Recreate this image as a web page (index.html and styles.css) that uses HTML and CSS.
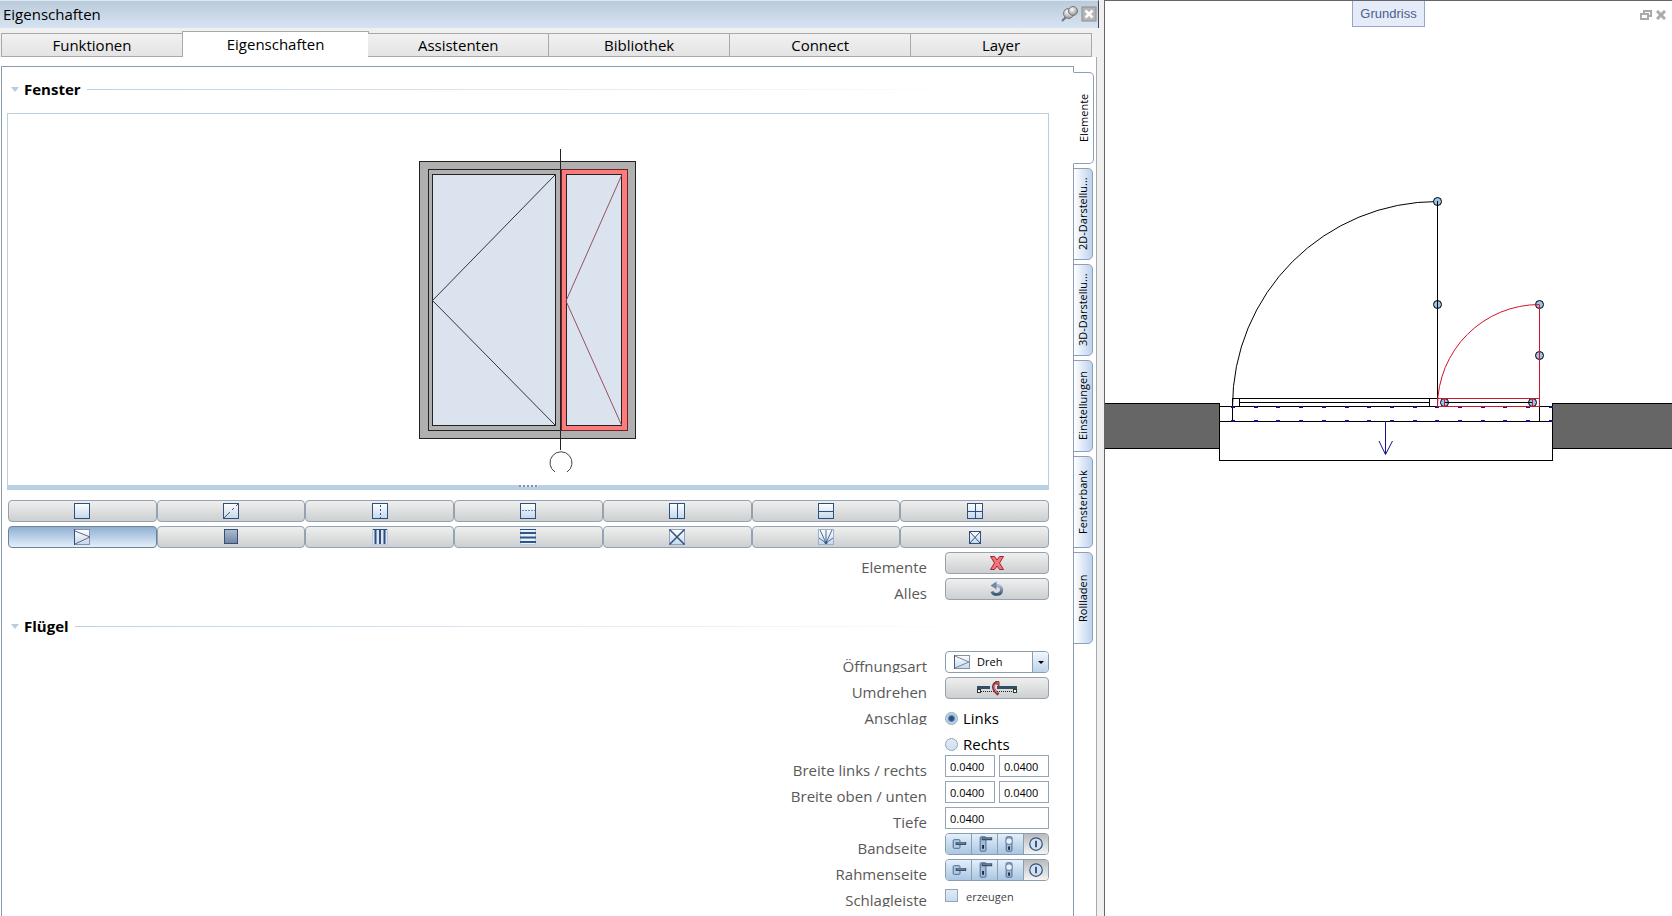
FILE: index.html
```html
<!DOCTYPE html>
<html lang="de">
<head>
<meta charset="utf-8">
<title>Eigenschaften</title>
<link rel="stylesheet" href="styles.css">
</head>
<body>
<svg class="defs" width="0" height="0" aria-hidden="true">
  <defs>
    <linearGradient id="glass" x1="0" y1="0" x2="0" y2="1"><stop offset="0" stop-color="#fff"/><stop offset="1" stop-color="#c3d8ee"/></linearGradient>
    <linearGradient id="solid" x1="0" y1="0" x2="0" y2="1"><stop offset="0" stop-color="#aebdd2"/><stop offset="1" stop-color="#70859f"/></linearGradient>
    <linearGradient id="steel" x1="0" y1="0" x2="0" y2="1"><stop offset="0" stop-color="#a9bdd2"/><stop offset="1" stop-color="#3c5876"/></linearGradient>
    <radialGradient id="ball" cx=".4" cy=".35" r=".7"><stop offset="0" stop-color="#fff"/><stop offset="1" stop-color="#8b8b8b"/></radialGradient>
    <symbol id="handle" viewBox="0 0 26 20">
      <rect x="7.500" y="5.500" width="7" height="9" rx="1" fill="#b4cbe3" stroke="#4b6788"/><path d="M10 9.500h11" stroke="#35516f" stroke-width="3"/><path d="M11 9h9" stroke="#88a3bf"/>
    </symbol>
    <symbol id="longhandle" viewBox="0 0 26 20">
      <rect x="8.500" y="2.500" width="6" height="15" rx="1" fill="#a3bbd5" stroke="#4b6788"/><path d="M10 4.500h11" stroke="#35516f" stroke-width="3"/><path d="M11 4h9" stroke="#7892ad"/><path d="M11.500 11v4" stroke="#172b45" stroke-width="2"/>
    </symbol>
    <symbol id="knob" viewBox="0 0 26 20">
      <rect x="8.500" y="2.500" width="6" height="15" rx="1" fill="#a3bbd5" stroke="#4b6788"/><circle cx="11.500" cy="7" r="3.500" fill="#e4f0fb" stroke="#5f7c9e"/><path d="M11.500 12.500v3.500" stroke="#172b45" stroke-width="2"/>
    </symbol>
    <symbol id="info" viewBox="0 0 26 20">
      <circle cx="12.500" cy="10" r="6.500" fill="#d3e2f2" stroke="#35547a" stroke-width="1.300"/><path d="M12.500 6.500v7" stroke="#35547a" stroke-width="2"/>
    </symbol>
  </defs>
</svg>
<div class="app">
  <section class="props">
    <header class="titlebar">
      <h1>Eigenschaften</h1>
      <button class="bare" aria-label="Anheften"><svg width="18" height="18" viewBox="0 0 18 18"><path d="M1 16l5-5" stroke="#777" stroke-width="2"/><circle cx="7.500" cy="8.500" r="5" fill="url(#ball)" stroke="#777"/><path d="M6 8l5-5 4 4-5 5z" fill="#d4d4d4"/><circle cx="12" cy="6" r="4.500" fill="url(#ball)" stroke="#777"/></svg></button>
      <button class="bare" aria-label="Schließen"><svg width="16" height="16" viewBox="0 0 16 16"><rect x="1" y="1" width="14" height="14" fill="#b5b5b5" stroke="#8e8e8e"/><path d="M4.500 4.500l7 7m0-7l-7 7" stroke="#fff" stroke-width="2.500"/></svg></button>
    </header>
    <nav class="tabs">
      <button>Funktionen</button><button class="active">Eigenschaften</button><button>Assistenten</button><button>Bibliothek</button><button>Connect</button><button>Layer</button>
    </nav>
    <div class="frame">
      <main class="panel">
        <h2 class="group">Fenster</h2>
        <div class="preview">
          <svg width="218" height="326" viewBox="419 148 218 326" fill="none" stroke="#222">
            <rect x="419.500" y="161.500" width="216" height="277" fill="#b0b0b0"/>
            <rect x="428.500" y="169.500" width="199" height="261"/>
            <rect x="561.500" y="169.500" width="66" height="261" fill="#fc7b7b" stroke="#6b2428"/>
            <rect x="432.500" y="174.500" width="123" height="251" fill="#dae3ee"/>
            <rect x="566.500" y="174.500" width="55" height="251" fill="#dae3ee"/>
            <path d="M555.500 174.500L432.500 300.500l123 125" stroke="#2f3744"/>
            <path d="M621.500 175.500L566 301l55.500 124" stroke="#96525f"/>
            <path d="M560.500 149v301"/>
            <path d="M555 472a11 11 0 1 1 12 0" stroke="#444"/>
          </svg>
          <div class="grip"></div>
        </div>
        <div class="toolgrid">
          <button aria-label="Feld"><svg class="ic"><rect x=".5" y=".5" width="15" height="15" fill="url(#glass)"/></svg></button>
          <button aria-label="Diagonal teilen"><svg class="ic"><rect x=".5" y=".5" width="15" height="15" fill="url(#glass)"/><path d="M1 15l6-6m2-2l2-2m2-2l2-2" stroke="#555"/></svg></button>
          <button aria-label="Kämpfer senkrecht"><svg class="ic"><rect x=".5" y=".5" width="15" height="15" fill="url(#glass)"/><path d="M8.500 2v13" stroke-dasharray="2 2"/></svg></button>
          <button aria-label="Kämpfer waagrecht"><svg class="ic"><rect x=".5" y=".5" width="15" height="15" fill="url(#glass)"/><path d="M2 7.500h13" stroke="#6f86a8" stroke-dasharray="2 1"/></svg></button>
          <button aria-label="Senkrecht teilen"><svg class="ic"><rect x=".5" y=".5" width="15" height="15" fill="url(#glass)"/><path d="M8.500 1v14"/></svg></button>
          <button aria-label="Waagrecht teilen"><svg class="ic"><rect x=".5" y=".5" width="15" height="15" fill="url(#glass)"/><path d="M1 8.500h14"/></svg></button>
          <button aria-label="Kreuz"><svg class="ic"><rect x=".5" y=".5" width="15" height="15" fill="url(#glass)"/><path d="M8.500 1v14M1 8.500h14"/></svg></button>
          <button class="on" aria-label="Flügel"><svg class="ic"><rect x=".5" y=".5" width="15" height="15" fill="url(#glass)" stroke="#8294ab"/><path d="M.5 0v16"/><path d="M1 2l15 6-15 7" stroke="#667"/></svg></button>
          <button aria-label="Füllung"><svg class="ic"><rect x="1.500" y=".5" width="13" height="14" fill="url(#solid)"/></svg></button>
          <button aria-label="Stäbe senkrecht"><svg class="ic"><rect x=".5" y=".5" width="15" height="15" fill="#d9e7f6" stroke="#b9cbe0"/><path d="M1 .5h14"/><path d="M3.500 1v14m4.500-14v14m4.500-14v14" stroke-width="2"/></svg></button>
          <button aria-label="Stäbe waagrecht"><svg class="ic"><rect x=".5" y=".5" width="15" height="15" fill="#e7f1fb" stroke="#b9cbe0"/><path d="M0 4h16M0 8.500h16M0 13h16" stroke="#2d5686" stroke-width="2"/><path d="M0 .5h16"/></svg></button>
          <button aria-label="Sprosse diagonal"><svg class="ic"><rect x=".5" y=".5" width="15" height="15" fill="url(#glass)" stroke="#8aa3c0"/><path d="M.5.5l15 15m0-15l-15 15" stroke-width="1.500"/></svg></button>
          <button aria-label="Sprosse Fächer"><svg class="ic"><rect x=".5" y=".5" width="15" height="15" fill="url(#glass)" stroke="#9db2ca"/><path d="M8 14V1M8 14L2 1m6 13l6-13M8 14L1 9m7 5l7-5" stroke="#4f6d92"/><circle cx="8" cy="13.500" r="1.500" fill="#35547a" stroke="none"/></svg></button>
          <button aria-label="Öffnung leer"><svg class="ic"><rect x="2.500" y="2.500" width="11" height="12" fill="url(#glass)"/><path d="M3 3l10 11m0-11L3 14"/></svg></button>
        </div>
        <div class="rows">
          <span class="lbl">Elemente</span>
          <button class="btn" aria-label="Elemente löschen"><svg width="16" height="16" viewBox="0 0 16 16"><path d="M1.500 1.500h4L8 5l2.500-3.500h4L10.500 8l4 6.500h-4L8 11l-2.500 3.500h-4L5.500 8z" fill="#f0747b" stroke="#a3242c"/></svg></button>
          <span class="lbl">Alles</span>
          <button class="btn" aria-label="Alles zurücksetzen"><svg width="16" height="16" viewBox="0 0 16 16"><path d="M3 10.500c1.500 4 9 4 9.500-1C13 5.500 10 4.500 7 4.500" fill="none" stroke="url(#steel)" stroke-width="3"/><path d="M7.500.5v8L1.500 4.500z" fill="#6f8aa6"/></svg></button>
        </div>
        <h2 class="group second">Flügel</h2>
        <div class="rows">
          <label class="lbl" for="art">Öffnungsart</label>
          <div class="combo">
            <svg width="16" height="14" viewBox="0 0 16 14"><rect x=".5" y=".5" width="15" height="13" fill="url(#glass)" stroke="#8294ab"/><path d="M.5 0v14" stroke="#4b5e78"/><path d="M1 1l14 6-14 6" fill="none" stroke="#778699"/></svg>
            <select id="art"><option>Dreh</option></select>
            <span class="arrow"></span>
          </div>
          <span class="lbl">Umdrehen</span>
          <button class="btn" aria-label="Umdrehen"><svg width="40" height="16" viewBox="0 0 40 16"><path d="M0 7.500h13m7 0h20" stroke="#2f5065" stroke-width="3"/><path d="M4 11.500h32" stroke="#222" stroke-dasharray="1 1"/><rect x=".5" y="9.500" width="3" height="3" fill="#fff" stroke="#333"/><rect x="36.500" y="9.500" width="3" height="3" fill="#fff" stroke="#333"/><path d="M21.500 14.500C17 11 15.500 7 17 4.500c1-1.500 3-2 4-1" fill="none" stroke="#8c3239" stroke-width="3"/><path d="M20.500 13C17.500 10 16.500 7 17.500 5c.8-1 2-1.500 3-1" fill="none" stroke="#e0a0a2"/><path d="M18.500 1.500h3.500v5z" fill="#c4777b" stroke="#8c3239"/></svg></button>
          <span class="lbl">Anschlag</span>
          <label class="radio"><input type="radio" name="anschlag" checked>Links</label>
          <label class="radio only"><input type="radio" name="anschlag">Rechts</label>
          <span class="lbl">Breite links / rechts</span>
          <div class="pair"><input type="text" value="0.0400" aria-label="Breite links"><input type="text" value="0.0400" aria-label="Breite rechts"></div>
          <span class="lbl">Breite oben / unten</span>
          <div class="pair"><input type="text" value="0.0400" aria-label="Breite oben"><input type="text" value="0.0400" aria-label="Breite unten"></div>
          <label class="lbl" for="tiefe">Tiefe</label>
          <div class="pair"><input id="tiefe" type="text" value="0.0400"></div>
          <span class="lbl">Bandseite</span>
          <div class="seg"><button aria-label="Griff"><svg><use href="#handle"/></svg></button><button aria-label="Griff mit Schild"><svg><use href="#longhandle"/></svg></button><button aria-label="Knauf"><svg><use href="#knob"/></svg></button><button class="on" aria-label="Kein Beschlag"><svg><use href="#info"/></svg></button></div>
          <span class="lbl">Rahmenseite</span>
          <div class="seg"><button aria-label="Griff"><svg><use href="#handle"/></svg></button><button aria-label="Griff mit Schild"><svg><use href="#longhandle"/></svg></button><button aria-label="Knauf"><svg><use href="#knob"/></svg></button><button class="on" aria-label="Kein Beschlag"><svg><use href="#info"/></svg></button></div>
          <span class="lbl">Schlagleiste</span>
          <label class="check"><input type="checkbox">erzeugen</label>
        </div>
      </main>
      <nav class="side">
        <button class="active">Elemente</button><button>2D-Darstellu...</button><button>3D-Darstellu...</button><button>Einstellungen</button><button>Fensterbank</button><button>Rollladen</button>
      </nav>
    </div>
  </section>
  <section class="plan">
    <header class="planbar">
      <button class="plantab">Grundriss</button>
      <div class="planctl">
        <button class="bare" aria-label="Wiederherstellen"><svg width="12" height="10" viewBox="0 0 12 10" fill="#fff" stroke="#aaa" stroke-width="2"><rect x="4" y="1" width="7" height="5"/><rect x="1" y="4" width="7" height="5"/></svg></button>
        <button class="bare" aria-label="Schließen"><svg width="10" height="10" viewBox="0 0 10 10"><path d="M1 1l8 8m0-8l-8 8" stroke="#aaa" stroke-width="3"/></svg></button>
      </div>
    </header>
    <svg class="drawing" viewBox="1105 28 567 888" preserveAspectRatio="xMidYMin meet" fill="none" stroke="#000" shape-rendering="crispEdges">
      <path d="M1105 403.500h114.500v45H1105M1672 403.500h-119.500v45H1672" fill="#666"/>
      <path d="M1219.500 406.500h333v54h-333zM1219.500 421.500h333"/>
      <path d="M1232.500 421.500v-23h205M1239.500 398.500v8m0-4h190m0-4v8M1539.500 406.500v15"/>
      <path d="M1437.500 406.500v-205"/><path d="M1232.500 406.500a205 205 0 0 1 205-205" shape-rendering="auto"/>
      <path d="M1231 407h322" stroke="#12128a" stroke-width="2" stroke-dasharray="4 18.700"/>
      <path d="M1231 421h322" stroke="#12128a" stroke-width="2" stroke-dasharray="4 18.700"/>
      <g fill="#9cc3e8" shape-rendering="auto"><circle cx="1437.500" cy="201.500" r="4"/><circle cx="1437.500" cy="304.500" r="4"/><circle cx="1539.500" cy="304.500" r="4"/><circle cx="1539.500" cy="355.500" r="4"/><circle cx="1444.500" cy="402.500" r="4"/><circle cx="1532.500" cy="402.500" r="4"/></g>
      <path d="M1437.500 201v8m0 91v8M1444 402.500h88"/>
      <g stroke="#d2142a"><path d="M1437.500 398.500h102v8h-102zM1539.500 304.500v102M1444.500 399v7m88-7v7"/><path d="M1437.500 406.500a102 102 0 0 1 102-102" shape-rendering="auto"/></g>
      <path d="M1385.500 421v33" stroke="#12128a"/><path d="M1379 441l6.500 13.500 7-13.500" stroke="#12128a" shape-rendering="auto"/>
    </svg>
  </section>
</div>
</body>
</html>
```
FILE: styles.css
```css
* { box-sizing: border-box; }
body { margin: 0; background: #f0f0f0; color: #000; font: 15px/20px "Open Sans", "Noto Sans", sans-serif; }
button, input, select { font: inherit; color: inherit; margin: 0; padding: 0; }
h1, h2 { margin: 0; font-size: 15px; }
svg { display: block; }
.defs { position: absolute; }
.app { display: grid; grid-template-columns: 1104fr 568fr; height: 100vh; overflow: hidden; }

.props { display: flex; flex-direction: column; min-width: 0; }
.titlebar { display: flex; align-items: center; gap: 2px; height: 28px; margin-right: 5px; padding: 0 1px 2px 3px; border-top: 1px solid #d8e8f6; border-right: 1px solid #445; background: linear-gradient(#bccbd9, #d5e3f3); }
.titlebar h1 { flex: 1; font-weight: 400; }
.bare { display: flex; border: 0; background: none; }

.tabs { display: flex; align-items: flex-end; height: 29px; margin: 0 12px 0 1px; }
.tabs button { flex: 1; height: 24px; border: 1px solid #a9a9a9; border-left-width: 0; background: linear-gradient(#f1f1f1, #e4e4e4); }
.tabs button:first-child { border-left-width: 1px; }
.tabs .active { height: 26px; margin: 0 -1px; padding-bottom: 2px; border-left-width: 1px; border-bottom: 0; background: #fff; flex-grow: 1.03; }

.frame { flex: 1; display: flex; align-items: stretch; margin-right: 7px; padding-top: 9px; border-right: 1px solid #a9a9a9; background: #fff; }
.panel { flex: 1; margin-left: 1px; padding: 12px 24px 0 5px; border: 1px solid #8b9bab; border-width: 1px 1px 0; }
.group { display: flex; align-items: center; gap: 6px; height: 20px; }
.group::before { content: ""; border: 4px solid transparent; border-top: 5px solid #b9ccda; border-bottom: 0; margin: 0 -1px 0 4px; }
.group::after { content: ""; flex: 1; height: 1px; margin-right: 70px; background: linear-gradient(90deg, #bdd2e4, #fff); }
.second { margin: 16px 0 15px; }

.preview { display: flex; flex-direction: column; align-items: center; justify-content: space-between; height: 377px; margin-top: 14px; padding-top: 34px; border: 1px solid #b9cfdd; border-bottom: 0; }
.grip { align-self: stretch; height: 5px; background: #b9cfe3; }
.grip::before { content: ""; display: block; width: 19px; height: 2px; margin: 0 auto; background: repeating-linear-gradient(90deg, #7e93ad 0 2px, #e6eef6 2px 4px); }

.toolgrid { display: grid; grid-template-columns: repeat(7, 1fr); row-gap: 4px; margin: 10px 0 4px 1px; }
.toolgrid button, .btn { display: flex; align-items: center; justify-content: center; height: 22px; border: 1px solid #93a3b1; border-radius: 4px; background: linear-gradient(#efefef, #cdcfd0); }
.toolgrid .on { background: linear-gradient(#8fb0d3, #e3effb); border-color: #6e8298; }
.ic { width: 16px; height: 16px; fill: none; stroke: #324f7c; }

.rows { display: grid; grid-template-columns: 1fr 104px; grid-auto-rows: 22px; gap: 4px 18px; }
.lbl { overflow: hidden; padding-top: 8px; line-height: 14px; text-align: right; color: #595959; }
.combo { position: relative; display: flex; align-items: center; height: 22px; border: 1px solid #8b9db0; border-radius: 4px; background: #fff; overflow: hidden; }
.combo svg { position: absolute; left: 8px; }
.combo select { width: 100%; height: 100%; padding-left: 31px; border: 0; background: none; appearance: none; font-size: 11px; }
.arrow { position: absolute; right: 0; width: 16px; height: 20px; border-left: 1px solid #8b9db0; background: linear-gradient(#f2f8fe, #bdd3ea); pointer-events: none; }
.arrow::after { content: ""; position: absolute; left: 5px; top: 9px; border: 3px solid transparent; border-top-color: #000; border-bottom: 0; }
.radio, .check { display: flex; align-items: center; }
.radio { gap: 5px; padding-top: 8px; line-height: 14px; }
.only { grid-column: 2; }
.radio input { appearance: none; width: 13px; height: 13px; border: 1px solid #94a5b6; border-radius: 50%; background: linear-gradient(#dfeaf6, #cfe0f2); }
.radio input:checked { background: radial-gradient(circle, #2d527c 0 2px, #a9c6e3 4px, #d7e6f5 6px); }
.pair { display: flex; gap: 4px; }
.pair input { flex: 1; min-width: 0; height: 22px; padding: 0 4px; border: 1px solid #94a5b6; background: #fff; font-size: 11px; }
.seg { display: grid; grid-template-columns: repeat(4, 1fr); border: 1px solid #8b9db0; border-radius: 4px; overflow: hidden; }
.seg button { border: 0; border-left: 1px solid #8b9db0; background: linear-gradient(#e4effa, #a9c6e3); }
.seg button:first-child { border-left: 0; }
.seg .on { background: linear-gradient(#b8babc, #f4f4f4); }
.seg svg { width: 25px; height: 20px; }
.check { gap: 8px; padding-top: 2px; font-size: 11px; color: #444; }
.check input { appearance: none; width: 13px; height: 13px; margin-bottom: 3px; border: 1px solid #94a5b6; background: linear-gradient(#dfeaf6, #c7dbef); }

.side { display: flex; flex-direction: column; gap: 4px; width: 23px; margin-left: -1px; padding-top: 6px; }
.side button { writing-mode: vertical-rl; transform: rotate(180deg); width: 20px; height: 92px; border: 1px solid #8ba0b8; border-radius: 5px 0 0 5px; background: linear-gradient(270deg, #fff, #bdd2ee); font-size: 11px; line-height: 18px; }
.side .active { width: 21px; border-right-color: #fff; background: #fff; }

.plan { display: flex; flex-direction: column; min-width: 0; border: 1px solid #666; border-width: 1px 0 0 1px; background: #fff; }
.planbar { display: grid; grid-template-columns: 1fr auto 1fr; height: 27px; }
.plantab { grid-column: 2; height: 26px; width: 73px; border: 1px solid #9aa7c4; border-top: 0; background: #e6ebfa; color: #4c5f88; font: 13px "Liberation Sans", Arial, sans-serif; }
.planctl { display: flex; align-items: center; justify-content: flex-end; gap: 4px; padding-right: 6px; }
.drawing { width: 100%; }
```
